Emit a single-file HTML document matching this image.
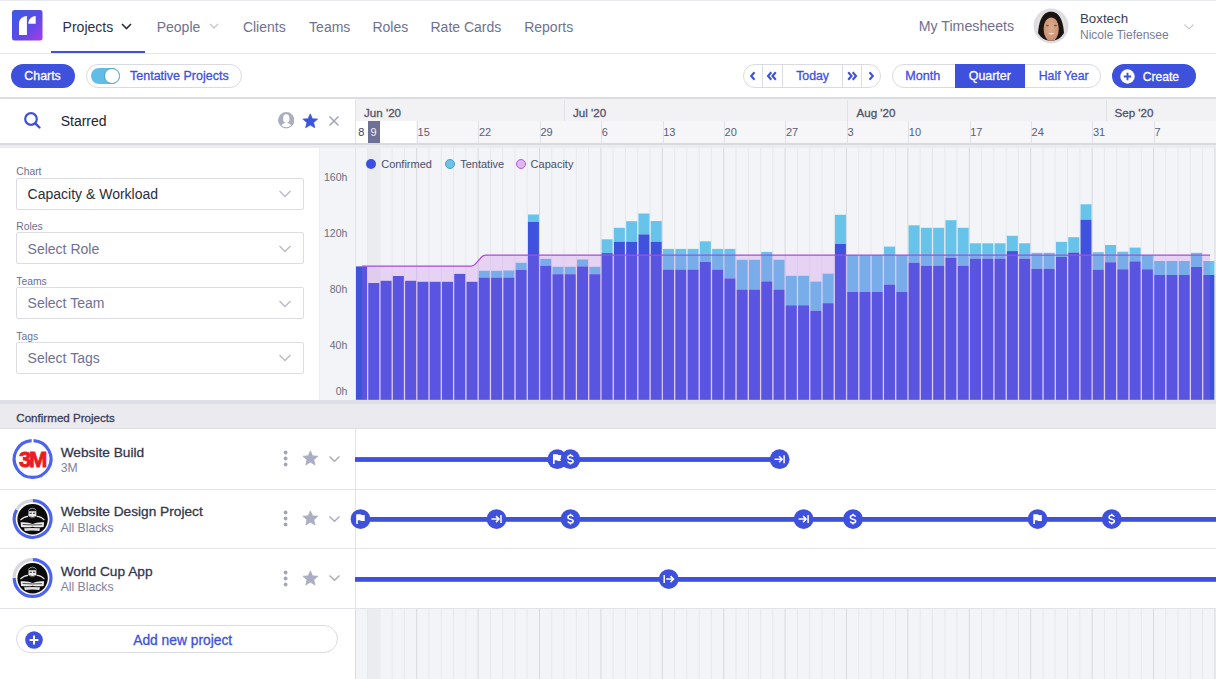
<!DOCTYPE html>
<html><head><meta charset="utf-8"><style>
html,body{margin:0;padding:0;width:1216px;height:679px;overflow:hidden;background:#fff}
body{position:relative;font-family:"Liberation Sans", sans-serif}
.t{position:absolute;white-space:nowrap;line-height:1}
.r{position:absolute}
svg{display:block}
</style></head><body>
<div class="r" style="left:0.0px;top:0.0px;width:1216.0px;height:1.0px;background:#E9EAEE;"></div>
<div class="r" style="left:0.0px;top:53.0px;width:1216.0px;height:1.0px;background:#E6E7EC;"></div>
<svg class="r" style="left:12px;top:10px" width="31" height="31" viewBox="0 0 31 31">
<defs><linearGradient id="lg" x1="0" y1="0" x2="1" y2="1"><stop offset="0" stop-color="#3B5BE6"/><stop offset="0.55" stop-color="#5B4BE6"/><stop offset="1" stop-color="#A93BE6"/></linearGradient></defs>
<rect x="0" y="0" width="30.5" height="30.5" rx="2.5" fill="url(#lg)"/>
<path d="M7 25V13.5C7 9.5 10 6.2 14.9 6V25Z" fill="#fff"/>
<path d="M16.3 13.8C16.3 9.6 19.2 6.2 23.7 6V13.8Z" fill="#fff"/>
</svg>
<div class="t" style="left:62.6px;top:19.8px;font-size:14px;color:#2E3040;font-weight:normal;">Projects</div>
<svg class="r" style="left:120px;top:22px" width="13" height="9" viewBox="0 0 13 9"><path d="M2 2L6.5 6.5L11 2" stroke="#2E3040" stroke-width="1.6" fill="none"/></svg>
<div class="r" style="left:51.0px;top:50.5px;width:94.0px;height:2.2px;background:#3E51DC;"></div>
<div class="t" style="left:156.7px;top:19.8px;font-size:14px;color:#6E7191;font-weight:normal;">People</div>
<svg class="r" style="left:208px;top:22px" width="12" height="8" viewBox="0 0 12 8"><path d="M2 2L6 6L10 2" stroke="#C3C5D3" stroke-width="1.3" fill="none"/></svg>
<div class="t" style="left:242.9px;top:19.8px;font-size:14px;color:#6E7191;font-weight:normal;">Clients</div>
<div class="t" style="left:309.1px;top:19.8px;font-size:14px;color:#6E7191;font-weight:normal;">Teams</div>
<div class="t" style="left:372.4px;top:19.8px;font-size:14px;color:#6E7191;font-weight:normal;">Roles</div>
<div class="t" style="left:430.5px;top:19.8px;font-size:14px;color:#6E7191;font-weight:normal;">Rate Cards</div>
<div class="t" style="left:524.2px;top:19.8px;font-size:14px;color:#6E7191;font-weight:normal;">Reports</div>
<div class="t" style="left:918.7px;top:19.4px;font-size:14.2px;color:#6E7191;font-weight:normal;">My Timesheets</div>
<svg class="r" style="left:1033.4px;top:8.4px" width="36" height="36" viewBox="0 0 36 36">
<defs><clipPath id="ac"><circle cx="18" cy="18" r="14.7"/></clipPath><radialGradient id="fg" cx="0.5" cy="0.45" r="0.6"><stop offset="0" stop-color="#DDAD8F"/><stop offset="1" stop-color="#C48B6C"/></radialGradient></defs>
<circle cx="18" cy="18" r="17.4" fill="#DCDCE2"/>
<circle cx="18" cy="18" r="14.7" fill="#E4E1DF"/>
<g clip-path="url(#ac)">
<path d="M4.8 36C4.6 22 5.5 4.2 18 3.4C30.5 4.2 31.4 22 31.2 36Z" fill="#191311"/>
<ellipse cx="18.2" cy="20.8" rx="7.6" ry="12.6" fill="url(#fg)"/>
<path d="M10.2 19C10.5 11 13.5 6.8 18.2 6.8C23 6.8 26 11 26.2 19C25 13 22 9.6 18.2 9.6C14.5 9.6 11.4 13 10.2 19Z" fill="#191311"/>
<ellipse cx="14.4" cy="17.6" rx="1.5" ry="0.8" fill="#7A5442"/>
<ellipse cx="22.4" cy="17.6" rx="1.5" ry="0.8" fill="#7A5442"/>
<path d="M14.8 24.8Q18.3 28.2 21.8 24.8Q18.3 25.9 14.8 24.8Z" fill="#F6F2EE"/>
</g></svg>
<div class="t" style="left:1080.0px;top:12.1px;font-size:13.3px;color:#3A3C58;font-weight:normal;">Boxtech</div>
<div class="t" style="left:1080.0px;top:28.8px;font-size:12px;color:#7A7D9A;font-weight:normal;">Nicole Tiefensee</div>
<svg class="r" style="left:1183px;top:23px" width="12" height="8" viewBox="0 0 12 8"><path d="M1.5 1.5L6 6L10.5 1.5" stroke="#C8CAD6" stroke-width="1.2" fill="none"/></svg>
<div class="r" style="left:11.0px;top:63.8px;width:64.0px;height:24.2px;background:#3E51DC;border-radius:12px"></div>
<div class="t" style="left:24.3px;top:69.8px;font-size:12.4px;color:#fff;font-weight:normal;-webkit-text-stroke:0.3px #fff;">Charts</div>
<div class="r" style="left:85.5px;top:64.0px;width:156.5px;height:24.0px;background:#fff;border:1px solid #D9DAE2;border-radius:12px;box-sizing:border-box"></div>
<div class="r" style="left:91.3px;top:68.0px;width:28.0px;height:16.0px;background:#62BDE6;border-radius:8px"></div>
<div class="r" style="left:104.3px;top:68.3px;width:15.4px;height:15.4px;border-radius:50%;background:#fff;box-sizing:border-box;border:1.2px solid #3F9CC4"></div>
<div class="t" style="left:130.0px;top:69.7px;font-size:12.5px;color:#3E51DC;font-weight:normal;-webkit-text-stroke:0.3px #3E51DC;">Tentative Projects</div>
<div class="r" style="left:743.4px;top:64px;width:137.3px;height:23.6px;border:1px solid #D9DAE2;border-radius:12px;box-sizing:border-box;background:#fff"></div>
<div class="r" style="left:762.4px;top:64.5px;width:1.0px;height:22.6px;background:#DCDDE4;"></div>
<div class="r" style="left:781.5px;top:64.5px;width:1.0px;height:22.6px;background:#DCDDE4;"></div>
<div class="r" style="left:842.2px;top:64.5px;width:1.0px;height:22.6px;background:#DCDDE4;"></div>
<div class="r" style="left:861.4px;top:64.5px;width:1.0px;height:22.6px;background:#DCDDE4;"></div>
<svg class="r" style="left:748px;top:70px" width="10" height="12" viewBox="0 0 10 12"><path d="M6.5 2.3L3.2 6L6.5 9.7" stroke="#3E51DC" stroke-width="2.1" fill="none"/></svg>
<svg class="r" style="left:765px;top:70px" width="14" height="12" viewBox="0 0 14 12"><path d="M6.3 2.3L3 6L6.3 9.7M10.8 2.3L7.5 6L10.8 9.7" stroke="#3E51DC" stroke-width="2.1" fill="none"/></svg>
<div class="t" style="left:796.2px;top:70.4px;font-size:12.3px;color:#3E51DC;font-weight:normal;-webkit-text-stroke:0.3px #3E51DC;">Today</div>
<svg class="r" style="left:845px;top:70px" width="14" height="12" viewBox="0 0 14 12"><path d="M3.2 2.3L6.5 6L3.2 9.7M7.7 2.3L11 6L7.7 9.7" stroke="#3E51DC" stroke-width="2.1" fill="none"/></svg>
<svg class="r" style="left:866px;top:70px" width="10" height="12" viewBox="0 0 10 12"><path d="M3.5 2.3L6.8 6L3.5 9.7" stroke="#3E51DC" stroke-width="2.1" fill="none"/></svg>
<div class="r" style="left:891.9px;top:64px;width:209px;height:24px;border:1px solid #D9DAE2;border-radius:12px;box-sizing:border-box;background:#fff"></div>
<div class="r" style="left:954.8px;top:64.0px;width:69.9px;height:24.0px;background:#3E51DC;"></div>
<div class="t" style="left:905.3px;top:70.1px;font-size:12.6px;color:#3E51DC;font-weight:normal;-webkit-text-stroke:0.3px #3E51DC;">Month</div>
<div class="t" style="left:968.8px;top:70.3px;font-size:12.4px;color:#fff;font-weight:normal;-webkit-text-stroke:0.3px #fff;">Quarter</div>
<div class="t" style="left:1038.7px;top:70.4px;font-size:12.3px;color:#3E51DC;font-weight:normal;-webkit-text-stroke:0.3px #3E51DC;">Half Year</div>
<div class="r" style="left:1111.8px;top:64.0px;width:84.0px;height:24.0px;background:#3E51DC;border-radius:12px"></div>
<svg class="r" style="left:1119.5px;top:68.5px" width="15" height="15" viewBox="0 0 15 15"><circle cx="7.5" cy="7.5" r="7.2" fill="#fff"/><path d="M7.5 3.8V11.2M3.8 7.5H11.2" stroke="#3E51DC" stroke-width="1.9"/></svg>
<div class="t" style="left:1142.7px;top:70.6px;font-size:12.1px;color:#fff;font-weight:normal;-webkit-text-stroke:0.3px #fff;">Create</div>
<div class="r" style="left:0.0px;top:97.3px;width:1216.0px;height:2.2px;background:#DCDDE3;"></div>
<svg class="r" style="left:23px;top:111px" width="19" height="19" viewBox="0 0 19 19"><circle cx="8" cy="8" r="5.8" stroke="#3E51DC" stroke-width="2.2" fill="none"/><path d="M12.3 12.3L16.5 16.5" stroke="#3E51DC" stroke-width="2.4" stroke-linecap="round"/></svg>
<div class="t" style="left:60.7px;top:114.1px;font-size:14px;color:#1F2130;font-weight:normal;">Starred</div>
<svg class="r" style="left:277.5px;top:112.3px" width="16.5" height="16.5" viewBox="0 0 16.5 16.5"><defs><clipPath id="pc"><circle cx="8.25" cy="8.25" r="6.9"/></clipPath></defs><circle cx="8.25" cy="8.25" r="8.2" fill="#ABAEC0"/><g clip-path="url(#pc)"><ellipse cx="8.25" cy="6.6" rx="3.2" ry="4.3" fill="#fff"/><ellipse cx="8.25" cy="16" rx="5.6" ry="5.2" fill="#fff"/></g></svg>
<svg class="r" style="left:301.8px;top:112.5px" width="16.5" height="16.5" viewBox="0 0 24 24"><path d="M12 1.2L15.1 8.3L22.8 8.9L16.9 13.9L18.7 21.5L12 17.5L5.3 21.5L7.1 13.9L1.2 8.9L8.9 8.3Z" fill="#3B55E0" stroke="#3B55E0" stroke-width="1" stroke-linejoin="round"/></svg>
<svg class="r" style="left:328px;top:115px" width="12" height="12" viewBox="0 0 12 12"><path d="M1.5 1.5L10.5 10.5M10.5 1.5L1.5 10.5" stroke="#A2A5B8" stroke-width="1.5"/></svg>
<div class="r" style="left:355.0px;top:99.5px;width:1.0px;height:44.0px;background:#E3E4EA;"></div>
<div class="r" style="left:356.0px;top:99.3px;width:860.0px;height:21.5px;background:#F2F2F5;"></div>
<div class="r" style="left:356.0px;top:120.8px;width:860.0px;height:22.2px;background:#F6F6F9;"></div>
<div class="r" style="left:356.0px;top:120.8px;width:60.4px;height:22.2px;background:#FFFFFF;"></div>
<div class="r" style="left:563.7px;top:99.5px;width:1.0px;height:21.3px;background:#E1E2E8;"></div>
<div class="r" style="left:847.3px;top:99.5px;width:1.0px;height:21.3px;background:#E1E2E8;"></div>
<div class="r" style="left:1105.5px;top:99.5px;width:1.0px;height:21.3px;background:#E1E2E8;"></div>
<div class="t" style="left:364.0px;top:106.8px;font-size:11.6px;color:#505369;font-weight:normal;-webkit-text-stroke:0.3px #505369;">Jun '20</div>
<div class="t" style="left:573.0px;top:106.8px;font-size:11.6px;color:#505369;font-weight:normal;-webkit-text-stroke:0.3px #505369;">Jul '20</div>
<div class="t" style="left:856.5px;top:106.8px;font-size:11.6px;color:#505369;font-weight:normal;-webkit-text-stroke:0.3px #505369;">Aug '20</div>
<div class="t" style="left:1114.5px;top:106.8px;font-size:11.6px;color:#505369;font-weight:normal;-webkit-text-stroke:0.3px #505369;">Sep '20</div>
<div class="t" style="left:358.3px;top:126.5px;font-size:11px;color:#3F4259;font-weight:normal;">8</div>
<div class="r" style="left:416.9px;top:120.8px;width:1.0px;height:22.2px;background:#E1E2E8;"></div>
<div class="t" style="left:417.6px;top:126.5px;font-size:11px;color:#5A5D78;font-weight:normal;">15</div>
<div class="r" style="left:478.3px;top:120.8px;width:1.0px;height:22.2px;background:#E1E2E8;"></div>
<div class="t" style="left:479.0px;top:126.5px;font-size:11px;color:#5A5D78;font-weight:normal;">22</div>
<div class="r" style="left:539.7px;top:120.8px;width:1.0px;height:22.2px;background:#E1E2E8;"></div>
<div class="t" style="left:540.4px;top:126.5px;font-size:11px;color:#5A5D78;font-weight:normal;">29</div>
<div class="r" style="left:601.1px;top:120.8px;width:1.0px;height:22.2px;background:#E1E2E8;"></div>
<div class="t" style="left:601.8px;top:126.5px;font-size:11px;color:#5A5D78;font-weight:normal;">6</div>
<div class="r" style="left:662.5px;top:120.8px;width:1.0px;height:22.2px;background:#E1E2E8;"></div>
<div class="t" style="left:663.2px;top:126.5px;font-size:11px;color:#5A5D78;font-weight:normal;">13</div>
<div class="r" style="left:723.9px;top:120.8px;width:1.0px;height:22.2px;background:#E1E2E8;"></div>
<div class="t" style="left:724.6px;top:126.5px;font-size:11px;color:#5A5D78;font-weight:normal;">20</div>
<div class="r" style="left:785.3px;top:120.8px;width:1.0px;height:22.2px;background:#E1E2E8;"></div>
<div class="t" style="left:786.0px;top:126.5px;font-size:11px;color:#5A5D78;font-weight:normal;">27</div>
<div class="r" style="left:846.7px;top:120.8px;width:1.0px;height:22.2px;background:#E1E2E8;"></div>
<div class="t" style="left:847.4px;top:126.5px;font-size:11px;color:#5A5D78;font-weight:normal;">3</div>
<div class="r" style="left:908.1px;top:120.8px;width:1.0px;height:22.2px;background:#E1E2E8;"></div>
<div class="t" style="left:908.8px;top:126.5px;font-size:11px;color:#5A5D78;font-weight:normal;">10</div>
<div class="r" style="left:969.5px;top:120.8px;width:1.0px;height:22.2px;background:#E1E2E8;"></div>
<div class="t" style="left:970.2px;top:126.5px;font-size:11px;color:#5A5D78;font-weight:normal;">17</div>
<div class="r" style="left:1030.9px;top:120.8px;width:1.0px;height:22.2px;background:#E1E2E8;"></div>
<div class="t" style="left:1031.6px;top:126.5px;font-size:11px;color:#5A5D78;font-weight:normal;">24</div>
<div class="r" style="left:1092.3px;top:120.8px;width:1.0px;height:22.2px;background:#E1E2E8;"></div>
<div class="t" style="left:1093.0px;top:126.5px;font-size:11px;color:#5A5D78;font-weight:normal;">31</div>
<div class="r" style="left:1153.7px;top:120.8px;width:1.0px;height:22.2px;background:#E1E2E8;"></div>
<div class="t" style="left:1154.4px;top:126.5px;font-size:11px;color:#5A5D78;font-weight:normal;">7</div>
<div class="r" style="left:368.2px;top:120.8px;width:11.6px;height:22.2px;background:#6E7196;"></div>
<div class="t" style="left:370.6px;top:126.5px;font-size:11px;color:#F2F2F8;font-weight:normal;">9</div>
<div class="r" style="left:0.0px;top:142.8px;width:1216.0px;height:2.0px;background:#D9DAE0;"></div>
<div class="r" style="left:0.0px;top:144.8px;width:1216.0px;height:3.4px;background:#ECECF0;"></div>
<div class="r" style="left:0.0px;top:148.2px;width:319.2px;height:252.0px;background:#FFFFFF;"></div>
<div class="r" style="left:319.2px;top:148.2px;width:896.8px;height:252.0px;background:#F3F4F7;"></div>
<div class="r" style="left:319.2px;top:148.2px;width:1.0px;height:252.0px;background:#ECEDF1;"></div>
<div class="t" style="left:16.3px;top:167.4px;font-size:10.3px;color:#6C6F90;font-weight:normal;">Chart</div>
<div class="r" style="left:16.3px;top:177.5px;width:287.7px;height:32.3px;border:1px solid #DCDDE3;border-radius:2px;box-sizing:border-box;background:#fff"></div>
<div class="t" style="left:27.6px;top:186.9px;font-size:14px;color:#2B2D3A;font-weight:normal;">Capacity &amp; Workload</div>
<svg class="r" style="left:278px;top:189.0px" width="14" height="10" viewBox="0 0 14 10"><path d="M1.5 2L7 7.5L12.5 2" stroke="#B9BBC9" stroke-width="1.4" fill="none"/></svg>
<div class="t" style="left:16.3px;top:222.1px;font-size:10.3px;color:#6C6F90;font-weight:normal;">Roles</div>
<div class="r" style="left:16.3px;top:232.2px;width:287.7px;height:32.3px;border:1px solid #DCDDE3;border-radius:2px;box-sizing:border-box;background:#fff"></div>
<div class="t" style="left:27.6px;top:241.7px;font-size:14px;color:#6E7196;font-weight:normal;">Select Role</div>
<svg class="r" style="left:278px;top:243.7px" width="14" height="10" viewBox="0 0 14 10"><path d="M1.5 2L7 7.5L12.5 2" stroke="#B9BBC9" stroke-width="1.4" fill="none"/></svg>
<div class="t" style="left:16.3px;top:276.8px;font-size:10.3px;color:#6C6F90;font-weight:normal;">Teams</div>
<div class="r" style="left:16.3px;top:287.0px;width:287.7px;height:32.3px;border:1px solid #DCDDE3;border-radius:2px;box-sizing:border-box;background:#fff"></div>
<div class="t" style="left:27.6px;top:296.4px;font-size:14px;color:#6E7196;font-weight:normal;">Select Team</div>
<svg class="r" style="left:278px;top:298.5px" width="14" height="10" viewBox="0 0 14 10"><path d="M1.5 2L7 7.5L12.5 2" stroke="#B9BBC9" stroke-width="1.4" fill="none"/></svg>
<div class="t" style="left:16.3px;top:331.6px;font-size:10.3px;color:#6C6F90;font-weight:normal;">Tags</div>
<div class="r" style="left:16.3px;top:341.7px;width:287.7px;height:32.3px;border:1px solid #DCDDE3;border-radius:2px;box-sizing:border-box;background:#fff"></div>
<div class="t" style="left:27.6px;top:351.1px;font-size:14px;color:#6E7196;font-weight:normal;">Select Tags</div>
<svg class="r" style="left:278px;top:353.2px" width="14" height="10" viewBox="0 0 14 10"><path d="M1.5 2L7 7.5L12.5 2" stroke="#B9BBC9" stroke-width="1.4" fill="none"/></svg>
<div class="t" style="right:868.7px;top:172.1px;font-size:10.5px;color:#6A6D7E">160h</div>
<div class="t" style="right:868.7px;top:228.0px;font-size:10.5px;color:#6A6D7E">120h</div>
<div class="t" style="right:868.7px;top:283.8px;font-size:10.5px;color:#6A6D7E">80h</div>
<div class="t" style="right:868.7px;top:339.7px;font-size:10.5px;color:#6A6D7E">40h</div>
<div class="t" style="right:868.7px;top:386.2px;font-size:10.5px;color:#6A6D7E">0h</div>
<svg class="r" style="left:356px;top:148.2px" width="860" height="251.8" viewBox="356 148.2 860 251.8"><rect x="366.98" y="148.2" width="12.28" height="251.8" fill="#EBECEF"/><rect x="354.80" y="148.2" width="1" height="251.8" fill="#D8D9DF"/><rect x="367.08" y="148.2" width="1" height="251.8" fill="#E7E8EC"/><rect x="379.36" y="148.2" width="1" height="251.8" fill="#E7E8EC"/><rect x="391.64" y="148.2" width="1" height="251.8" fill="#E7E8EC"/><rect x="403.92" y="148.2" width="1" height="251.8" fill="#E7E8EC"/><rect x="416.20" y="148.2" width="1" height="251.8" fill="#D8D9DF"/><rect x="428.48" y="148.2" width="1" height="251.8" fill="#E7E8EC"/><rect x="440.76" y="148.2" width="1" height="251.8" fill="#E7E8EC"/><rect x="453.04" y="148.2" width="1" height="251.8" fill="#E7E8EC"/><rect x="465.32" y="148.2" width="1" height="251.8" fill="#E7E8EC"/><rect x="477.60" y="148.2" width="1" height="251.8" fill="#D8D9DF"/><rect x="489.88" y="148.2" width="1" height="251.8" fill="#E7E8EC"/><rect x="502.16" y="148.2" width="1" height="251.8" fill="#E7E8EC"/><rect x="514.44" y="148.2" width="1" height="251.8" fill="#E7E8EC"/><rect x="526.72" y="148.2" width="1" height="251.8" fill="#E7E8EC"/><rect x="539.00" y="148.2" width="1" height="251.8" fill="#D8D9DF"/><rect x="551.28" y="148.2" width="1" height="251.8" fill="#E7E8EC"/><rect x="563.56" y="148.2" width="1" height="251.8" fill="#E7E8EC"/><rect x="575.84" y="148.2" width="1" height="251.8" fill="#E7E8EC"/><rect x="588.12" y="148.2" width="1" height="251.8" fill="#E7E8EC"/><rect x="600.40" y="148.2" width="1" height="251.8" fill="#D8D9DF"/><rect x="612.68" y="148.2" width="1" height="251.8" fill="#E7E8EC"/><rect x="624.96" y="148.2" width="1" height="251.8" fill="#E7E8EC"/><rect x="637.24" y="148.2" width="1" height="251.8" fill="#E7E8EC"/><rect x="649.52" y="148.2" width="1" height="251.8" fill="#E7E8EC"/><rect x="661.80" y="148.2" width="1" height="251.8" fill="#D8D9DF"/><rect x="674.08" y="148.2" width="1" height="251.8" fill="#E7E8EC"/><rect x="686.36" y="148.2" width="1" height="251.8" fill="#E7E8EC"/><rect x="698.64" y="148.2" width="1" height="251.8" fill="#E7E8EC"/><rect x="710.92" y="148.2" width="1" height="251.8" fill="#E7E8EC"/><rect x="723.20" y="148.2" width="1" height="251.8" fill="#D8D9DF"/><rect x="735.48" y="148.2" width="1" height="251.8" fill="#E7E8EC"/><rect x="747.76" y="148.2" width="1" height="251.8" fill="#E7E8EC"/><rect x="760.04" y="148.2" width="1" height="251.8" fill="#E7E8EC"/><rect x="772.32" y="148.2" width="1" height="251.8" fill="#E7E8EC"/><rect x="784.60" y="148.2" width="1" height="251.8" fill="#D8D9DF"/><rect x="796.88" y="148.2" width="1" height="251.8" fill="#E7E8EC"/><rect x="809.16" y="148.2" width="1" height="251.8" fill="#E7E8EC"/><rect x="821.44" y="148.2" width="1" height="251.8" fill="#E7E8EC"/><rect x="833.72" y="148.2" width="1" height="251.8" fill="#E7E8EC"/><rect x="846.00" y="148.2" width="1" height="251.8" fill="#D8D9DF"/><rect x="858.28" y="148.2" width="1" height="251.8" fill="#E7E8EC"/><rect x="870.56" y="148.2" width="1" height="251.8" fill="#E7E8EC"/><rect x="882.84" y="148.2" width="1" height="251.8" fill="#E7E8EC"/><rect x="895.12" y="148.2" width="1" height="251.8" fill="#E7E8EC"/><rect x="907.40" y="148.2" width="1" height="251.8" fill="#D8D9DF"/><rect x="919.68" y="148.2" width="1" height="251.8" fill="#E7E8EC"/><rect x="931.96" y="148.2" width="1" height="251.8" fill="#E7E8EC"/><rect x="944.24" y="148.2" width="1" height="251.8" fill="#E7E8EC"/><rect x="956.52" y="148.2" width="1" height="251.8" fill="#E7E8EC"/><rect x="968.80" y="148.2" width="1" height="251.8" fill="#D8D9DF"/><rect x="981.08" y="148.2" width="1" height="251.8" fill="#E7E8EC"/><rect x="993.36" y="148.2" width="1" height="251.8" fill="#E7E8EC"/><rect x="1005.64" y="148.2" width="1" height="251.8" fill="#E7E8EC"/><rect x="1017.92" y="148.2" width="1" height="251.8" fill="#E7E8EC"/><rect x="1030.20" y="148.2" width="1" height="251.8" fill="#D8D9DF"/><rect x="1042.48" y="148.2" width="1" height="251.8" fill="#E7E8EC"/><rect x="1054.76" y="148.2" width="1" height="251.8" fill="#E7E8EC"/><rect x="1067.04" y="148.2" width="1" height="251.8" fill="#E7E8EC"/><rect x="1079.32" y="148.2" width="1" height="251.8" fill="#E7E8EC"/><rect x="1091.60" y="148.2" width="1" height="251.8" fill="#D8D9DF"/><rect x="1103.88" y="148.2" width="1" height="251.8" fill="#E7E8EC"/><rect x="1116.16" y="148.2" width="1" height="251.8" fill="#E7E8EC"/><rect x="1128.44" y="148.2" width="1" height="251.8" fill="#E7E8EC"/><rect x="1140.72" y="148.2" width="1" height="251.8" fill="#E7E8EC"/><rect x="1153.00" y="148.2" width="1" height="251.8" fill="#D8D9DF"/><rect x="1165.28" y="148.2" width="1" height="251.8" fill="#E7E8EC"/><rect x="1177.56" y="148.2" width="1" height="251.8" fill="#E7E8EC"/><rect x="1189.84" y="148.2" width="1" height="251.8" fill="#E7E8EC"/><rect x="1202.12" y="148.2" width="1" height="251.8" fill="#E7E8EC"/><rect x="1214.40" y="148.2" width="1" height="251.8" fill="#D8D9DF"/><rect x="356.00" y="266.60" width="11.0" height="133.40" fill="#3F52DE"/><rect x="368.28" y="283.20" width="11.0" height="116.80" fill="#3F52DE"/><rect x="380.56" y="281.00" width="11.0" height="119.00" fill="#3F52DE"/><rect x="392.84" y="276.20" width="11.0" height="123.80" fill="#3F52DE"/><rect x="405.12" y="281.00" width="11.0" height="119.00" fill="#3F52DE"/><rect x="417.40" y="282.00" width="11.0" height="118.00" fill="#3F52DE"/><rect x="429.68" y="282.00" width="11.0" height="118.00" fill="#3F52DE"/><rect x="441.96" y="282.00" width="11.0" height="118.00" fill="#3F52DE"/><rect x="454.24" y="274.10" width="11.0" height="125.90" fill="#3F52DE"/><rect x="466.52" y="282.00" width="11.0" height="118.00" fill="#3F52DE"/><rect x="478.80" y="271.00" width="11.0" height="6.80" fill="#67C3E9"/><rect x="478.80" y="277.80" width="11.0" height="122.20" fill="#3F52DE"/><rect x="491.08" y="271.00" width="11.0" height="6.80" fill="#67C3E9"/><rect x="491.08" y="277.80" width="11.0" height="122.20" fill="#3F52DE"/><rect x="503.36" y="270.70" width="11.0" height="7.10" fill="#67C3E9"/><rect x="503.36" y="277.80" width="11.0" height="122.20" fill="#3F52DE"/><rect x="515.64" y="263.00" width="11.0" height="7.10" fill="#67C3E9"/><rect x="515.64" y="270.10" width="11.0" height="129.90" fill="#3F52DE"/><rect x="527.92" y="214.70" width="11.0" height="7.40" fill="#67C3E9"/><rect x="527.92" y="222.10" width="11.0" height="177.90" fill="#3F52DE"/><rect x="540.20" y="259.00" width="11.0" height="7.00" fill="#67C3E9"/><rect x="540.20" y="266.00" width="11.0" height="134.00" fill="#3F52DE"/><rect x="552.48" y="267.00" width="11.0" height="7.40" fill="#67C3E9"/><rect x="552.48" y="274.40" width="11.0" height="125.60" fill="#3F52DE"/><rect x="564.76" y="267.00" width="11.0" height="7.40" fill="#67C3E9"/><rect x="564.76" y="274.40" width="11.0" height="125.60" fill="#3F52DE"/><rect x="577.04" y="259.70" width="11.0" height="6.90" fill="#67C3E9"/><rect x="577.04" y="266.60" width="11.0" height="133.40" fill="#3F52DE"/><rect x="589.32" y="267.00" width="11.0" height="7.40" fill="#67C3E9"/><rect x="589.32" y="274.40" width="11.0" height="125.60" fill="#3F52DE"/><rect x="601.60" y="239.50" width="11.0" height="13.80" fill="#67C3E9"/><rect x="601.60" y="253.30" width="11.0" height="146.70" fill="#3F52DE"/><rect x="613.88" y="228.00" width="11.0" height="14.00" fill="#67C3E9"/><rect x="613.88" y="242.00" width="11.0" height="158.00" fill="#3F52DE"/><rect x="626.16" y="221.40" width="11.0" height="20.60" fill="#67C3E9"/><rect x="626.16" y="242.00" width="11.0" height="158.00" fill="#3F52DE"/><rect x="638.44" y="213.70" width="11.0" height="20.90" fill="#67C3E9"/><rect x="638.44" y="234.60" width="11.0" height="165.40" fill="#3F52DE"/><rect x="650.72" y="221.20" width="11.0" height="20.80" fill="#67C3E9"/><rect x="650.72" y="242.00" width="11.0" height="158.00" fill="#3F52DE"/><rect x="663.00" y="249.10" width="11.0" height="20.70" fill="#67C3E9"/><rect x="663.00" y="269.80" width="11.0" height="130.20" fill="#3F52DE"/><rect x="675.28" y="249.10" width="11.0" height="20.70" fill="#67C3E9"/><rect x="675.28" y="269.80" width="11.0" height="130.20" fill="#3F52DE"/><rect x="687.56" y="249.10" width="11.0" height="20.70" fill="#67C3E9"/><rect x="687.56" y="269.80" width="11.0" height="130.20" fill="#3F52DE"/><rect x="699.84" y="241.50" width="11.0" height="20.70" fill="#67C3E9"/><rect x="699.84" y="262.20" width="11.0" height="137.80" fill="#3F52DE"/><rect x="712.12" y="249.10" width="11.0" height="20.70" fill="#67C3E9"/><rect x="712.12" y="269.80" width="11.0" height="130.20" fill="#3F52DE"/><rect x="724.40" y="249.10" width="11.0" height="29.50" fill="#67C3E9"/><rect x="724.40" y="278.60" width="11.0" height="121.40" fill="#3F52DE"/><rect x="736.68" y="260.00" width="11.0" height="29.80" fill="#67C3E9"/><rect x="736.68" y="289.80" width="11.0" height="110.20" fill="#3F52DE"/><rect x="748.96" y="260.00" width="11.0" height="29.80" fill="#67C3E9"/><rect x="748.96" y="289.80" width="11.0" height="110.20" fill="#3F52DE"/><rect x="761.24" y="252.10" width="11.0" height="29.50" fill="#67C3E9"/><rect x="761.24" y="281.60" width="11.0" height="118.40" fill="#3F52DE"/><rect x="773.52" y="260.00" width="11.0" height="29.80" fill="#67C3E9"/><rect x="773.52" y="289.80" width="11.0" height="110.20" fill="#3F52DE"/><rect x="785.80" y="276.00" width="11.0" height="29.50" fill="#67C3E9"/><rect x="785.80" y="305.50" width="11.0" height="94.50" fill="#3F52DE"/><rect x="798.08" y="276.00" width="11.0" height="29.50" fill="#67C3E9"/><rect x="798.08" y="305.50" width="11.0" height="94.50" fill="#3F52DE"/><rect x="810.36" y="281.80" width="11.0" height="29.20" fill="#67C3E9"/><rect x="810.36" y="311.00" width="11.0" height="89.00" fill="#3F52DE"/><rect x="822.64" y="273.90" width="11.0" height="29.50" fill="#67C3E9"/><rect x="822.64" y="303.40" width="11.0" height="96.60" fill="#3F52DE"/><rect x="834.92" y="215.00" width="11.0" height="29.20" fill="#67C3E9"/><rect x="834.92" y="244.20" width="11.0" height="155.80" fill="#3F52DE"/><rect x="847.20" y="255.30" width="11.0" height="36.90" fill="#67C3E9"/><rect x="847.20" y="292.20" width="11.0" height="107.80" fill="#3F52DE"/><rect x="859.48" y="255.30" width="11.0" height="36.90" fill="#67C3E9"/><rect x="859.48" y="292.20" width="11.0" height="107.80" fill="#3F52DE"/><rect x="871.76" y="255.30" width="11.0" height="36.90" fill="#67C3E9"/><rect x="871.76" y="292.20" width="11.0" height="107.80" fill="#3F52DE"/><rect x="884.04" y="246.80" width="11.0" height="38.00" fill="#67C3E9"/><rect x="884.04" y="284.80" width="11.0" height="115.20" fill="#3F52DE"/><rect x="896.32" y="255.30" width="11.0" height="36.90" fill="#67C3E9"/><rect x="896.32" y="292.20" width="11.0" height="107.80" fill="#3F52DE"/><rect x="908.60" y="225.50" width="11.0" height="37.50" fill="#67C3E9"/><rect x="908.60" y="263.00" width="11.0" height="137.00" fill="#3F52DE"/><rect x="920.88" y="228.00" width="11.0" height="38.00" fill="#67C3E9"/><rect x="920.88" y="266.00" width="11.0" height="134.00" fill="#3F52DE"/><rect x="933.16" y="228.00" width="11.0" height="38.00" fill="#67C3E9"/><rect x="933.16" y="266.00" width="11.0" height="134.00" fill="#3F52DE"/><rect x="945.44" y="220.40" width="11.0" height="37.60" fill="#67C3E9"/><rect x="945.44" y="258.00" width="11.0" height="142.00" fill="#3F52DE"/><rect x="957.72" y="228.00" width="11.0" height="38.00" fill="#67C3E9"/><rect x="957.72" y="266.00" width="11.0" height="134.00" fill="#3F52DE"/><rect x="970.00" y="243.50" width="11.0" height="15.40" fill="#67C3E9"/><rect x="970.00" y="258.90" width="11.0" height="141.10" fill="#3F52DE"/><rect x="982.28" y="243.50" width="11.0" height="15.40" fill="#67C3E9"/><rect x="982.28" y="258.90" width="11.0" height="141.10" fill="#3F52DE"/><rect x="994.56" y="243.50" width="11.0" height="15.40" fill="#67C3E9"/><rect x="994.56" y="258.90" width="11.0" height="141.10" fill="#3F52DE"/><rect x="1006.84" y="236.00" width="11.0" height="15.30" fill="#67C3E9"/><rect x="1006.84" y="251.30" width="11.0" height="148.70" fill="#3F52DE"/><rect x="1019.12" y="243.50" width="11.0" height="15.40" fill="#67C3E9"/><rect x="1019.12" y="258.90" width="11.0" height="141.10" fill="#3F52DE"/><rect x="1031.40" y="253.00" width="11.0" height="16.00" fill="#67C3E9"/><rect x="1031.40" y="269.00" width="11.0" height="131.00" fill="#3F52DE"/><rect x="1043.68" y="253.00" width="11.0" height="16.00" fill="#67C3E9"/><rect x="1043.68" y="269.00" width="11.0" height="131.00" fill="#3F52DE"/><rect x="1055.96" y="242.10" width="11.0" height="15.10" fill="#67C3E9"/><rect x="1055.96" y="257.20" width="11.0" height="142.80" fill="#3F52DE"/><rect x="1068.24" y="237.40" width="11.0" height="15.40" fill="#67C3E9"/><rect x="1068.24" y="252.80" width="11.0" height="147.20" fill="#3F52DE"/><rect x="1080.52" y="204.50" width="11.0" height="15.50" fill="#67C3E9"/><rect x="1080.52" y="220.00" width="11.0" height="180.00" fill="#3F52DE"/><rect x="1092.80" y="252.40" width="11.0" height="17.50" fill="#67C3E9"/><rect x="1092.80" y="269.90" width="11.0" height="130.10" fill="#3F52DE"/><rect x="1105.08" y="245.20" width="11.0" height="17.30" fill="#67C3E9"/><rect x="1105.08" y="262.50" width="11.0" height="137.50" fill="#3F52DE"/><rect x="1117.36" y="251.90" width="11.0" height="17.60" fill="#67C3E9"/><rect x="1117.36" y="269.50" width="11.0" height="130.50" fill="#3F52DE"/><rect x="1129.64" y="247.80" width="11.0" height="13.80" fill="#67C3E9"/><rect x="1129.64" y="261.60" width="11.0" height="138.40" fill="#3F52DE"/><rect x="1141.92" y="255.40" width="11.0" height="14.10" fill="#67C3E9"/><rect x="1141.92" y="269.50" width="11.0" height="130.50" fill="#3F52DE"/><rect x="1154.20" y="261.20" width="11.0" height="14.00" fill="#67C3E9"/><rect x="1154.20" y="275.20" width="11.0" height="124.80" fill="#3F52DE"/><rect x="1166.48" y="261.20" width="11.0" height="14.00" fill="#67C3E9"/><rect x="1166.48" y="275.20" width="11.0" height="124.80" fill="#3F52DE"/><rect x="1178.76" y="261.20" width="11.0" height="14.00" fill="#67C3E9"/><rect x="1178.76" y="275.20" width="11.0" height="124.80" fill="#3F52DE"/><rect x="1191.04" y="253.00" width="11.0" height="14.20" fill="#67C3E9"/><rect x="1191.04" y="267.20" width="11.0" height="132.80" fill="#3F52DE"/><rect x="1203.32" y="261.20" width="11.0" height="14.00" fill="#67C3E9"/><rect x="1203.32" y="275.20" width="11.0" height="124.80" fill="#3F52DE"/><path d="M362.0 266.3 L471 266.3 Q473.6 266.3 475.2 264.40000000000003 L481.6 257.2 Q483.2 255.3 485.8 255.3 L1210.0 255.3 L1210.0 400 L362.0 400Z" fill="rgba(185,96,238,0.22)"/><path d="M362.0 266.3 L471 266.3 Q473.6 266.3 475.2 264.40000000000003 L481.6 257.2 Q483.2 255.3 485.8 255.3 L1210.0 255.3" stroke="#AA48E4" stroke-width="1.25" fill="none"/></svg>
<div class="r" style="left:365.7px;top:159px;width:10.4px;height:10.4px;border-radius:50%;background:#3B50E0"></div>
<div class="t" style="left:381.2px;top:159.0px;font-size:11px;color:#4A4D6A;font-weight:normal;">Confirmed</div>
<div class="r" style="left:444.7px;top:159px;width:10.4px;height:10.4px;border-radius:50%;background:#6BC3E6;border:1px solid #4A9DC6;box-sizing:border-box"></div>
<div class="t" style="left:460.2px;top:159.0px;font-size:11px;color:#4A4D6A;font-weight:normal;">Tentative</div>
<div class="r" style="left:515.5px;top:159px;width:10.4px;height:10.4px;border-radius:50%;background:#DDB8F2;border:1px solid #B25AE6;box-sizing:border-box"></div>
<div class="t" style="left:530.6px;top:159.0px;font-size:11px;color:#4A4D6A;font-weight:normal;">Capacity</div>
<div class="r" style="left:355.2px;top:148.2px;width:1.0px;height:252.0px;background:#E3E4EA;"></div>
<div class="r" style="left:0.0px;top:400.0px;width:1216.0px;height:3.5px;background:#DFDFE7;"></div>
<div class="r" style="left:0.0px;top:403.5px;width:1216.0px;height:25.7px;background:#EAEAEF;"></div>
<div class="r" style="left:0.0px;top:428.4px;width:1216.0px;height:1.0px;background:#DEDFE5;"></div>
<div class="t" style="left:16.3px;top:411.8px;font-size:11.6px;color:#3A3D55;font-weight:normal;-webkit-text-stroke:0.3px #3A3D55;">Confirmed Projects</div>
<div class="r" style="left:0.0px;top:429.2px;width:1216.0px;height:179.0px;background:#FFFFFF;"></div>
<div class="r" style="left:0.0px;top:488.5px;width:1216.0px;height:1.1px;background:#E3E4EA;"></div>
<div class="r" style="left:0.0px;top:547.9px;width:1216.0px;height:1.1px;background:#E3E4EA;"></div>
<div class="r" style="left:0.0px;top:607.6px;width:1216.0px;height:1.1px;background:#E3E4EA;"></div>
<div class="r" style="left:355.0px;top:429.2px;width:1.0px;height:250.0px;background:#E3E4EA;"></div>
<svg class="r" style="left:8px;top:433.7px" width="50" height="50" viewBox="8 433.7 50 50"><path d="M33.56 440.33A18.4 18.4 0 1 1 31.64 440.33" stroke="#4B63F0" stroke-width="3.1" fill="none"/><text x="32.1" y="466.59999999999997" text-anchor="middle" font-family="Liberation Sans" font-weight="bold" font-size="22" letter-spacing="-2.2" fill="#EC1B22" stroke="#EC1B22" stroke-width="0.9">3M</text></svg>
<div class="t" style="left:60.7px;top:445.6px;font-size:13.7px;color:#34364D;font-weight:normal;-webkit-text-stroke:0.3px #34364D;">Website Build</div>
<div class="t" style="left:60.7px;top:461.7px;font-size:12.2px;color:#7F829C;font-weight:normal;">3M</div>
<svg class="r" style="left:282px;top:450.2px" width="8" height="18" viewBox="0 0 8 18"><circle cx="3.6" cy="2.5" r="1.9" fill="#A2A5BA"/><circle cx="3.6" cy="8.5" r="1.9" fill="#A2A5BA"/><circle cx="3.6" cy="14.5" r="1.9" fill="#A2A5BA"/></svg>
<svg class="r" style="left:301.6px;top:449.9px" width="16.8" height="16.8" viewBox="0 0 24 24"><path d="M12 1.2L15.1 8.3L22.8 8.9L16.9 13.9L18.7 21.5L12 17.5L5.3 21.5L7.1 13.9L1.2 8.9L8.9 8.3Z" fill="#ABADC4" stroke="#ABADC4" stroke-width="1" stroke-linejoin="round"/></svg>
<svg class="r" style="left:328px;top:454.7px" width="13" height="8" viewBox="0 0 13 8"><path d="M1.5 1.5L6.5 6.3L11.5 1.5" stroke="#A8ABBE" stroke-width="1.4" fill="none"/></svg>
<svg class="r" style="left:8px;top:493.5px" width="50" height="50" viewBox="8 493.5 50 50"><path d="M32.60 500.10A18.4 18.4 0 1 1 16.67 509.30" stroke="#4B63F0" stroke-width="3.2" fill="none"/><path d="M16.67 509.30A18.4 18.4 0 0 1 32.57 500.10" stroke="#D7D8DE" stroke-width="3.2" fill="none"/><circle cx="32.6" cy="518.8" r="15.2" fill="#0B0B0B"/><path d="M28.6 509.29999999999995Q32.4 505.19999999999993 36.2 509.29999999999995L36.4 515.3Q32.4 519.0 28.400000000000002 515.3Z" fill="#EDEDED"/><path d="M28.900000000000002 509.49999999999994Q32.4 506.19999999999993 36.0 509.49999999999994L36.0 510.79999999999995L28.900000000000002 510.79999999999995Z" fill="#1A1A1A"/><path d="M29.6 512.1999999999999h2.3v1.1h-2.3zM33.0 512.1999999999999h2.3v1.1h-2.3z" fill="#2A2A2A"/><path d="M30.0 515.5999999999999Q32.4 517.3 35.0 515.5999999999999L34.6 517.1999999999999Q32.4 518.4 30.400000000000002 517.1999999999999Z" fill="#555"/><path d="M20.400000000000002 519.5999999999999Q24.1 515.8 28.200000000000003 515.9M36.6 515.9Q40.900000000000006 515.8 44.400000000000006 519.5999999999999" stroke="#E6E6E6" stroke-width="1.2" fill="none"/><path d="M20.6 521.8Q28.6 521.4 32.6 523.4Q36.6 521.4 44.1 521.8L43.6 526.4Q36.6 527.1999999999999 32.6 526.1999999999999Q28.6 527.1999999999999 21.1 526.4Z" fill="#EDEDED"/><path d="M22.6 524.0Q32.6 524.8 42.1 524.1999999999999" stroke="#222" stroke-width="0.8" fill="none"/><path d="M24.1 527.8Q32.1 527.0 40.0 527.8L39.4 530.4Q32.1 529.8 24.8 530.4Z" fill="#E0E0E0"/></svg>
<div class="t" style="left:60.7px;top:505.4px;font-size:13.7px;color:#34364D;font-weight:normal;-webkit-text-stroke:0.3px #34364D;">Website Design Project</div>
<div class="t" style="left:60.7px;top:521.5px;font-size:12.2px;color:#7F829C;font-weight:normal;">All Blacks</div>
<svg class="r" style="left:282px;top:510.0px" width="8" height="18" viewBox="0 0 8 18"><circle cx="3.6" cy="2.5" r="1.9" fill="#A2A5BA"/><circle cx="3.6" cy="8.5" r="1.9" fill="#A2A5BA"/><circle cx="3.6" cy="14.5" r="1.9" fill="#A2A5BA"/></svg>
<svg class="r" style="left:301.6px;top:509.7px" width="16.8" height="16.8" viewBox="0 0 24 24"><path d="M12 1.2L15.1 8.3L22.8 8.9L16.9 13.9L18.7 21.5L12 17.5L5.3 21.5L7.1 13.9L1.2 8.9L8.9 8.3Z" fill="#ABADC4" stroke="#ABADC4" stroke-width="1" stroke-linejoin="round"/></svg>
<svg class="r" style="left:328px;top:514.5px" width="13" height="8" viewBox="0 0 13 8"><path d="M1.5 1.5L6.5 6.3L11.5 1.5" stroke="#A8ABBE" stroke-width="1.4" fill="none"/></svg>
<svg class="r" style="left:8px;top:553.4px" width="50" height="50" viewBox="8 553.4 50 50"><path d="M32.60 560.00A18.4 18.4 0 1 1 14.20 578.40" stroke="#4B63F0" stroke-width="3.2" fill="none"/><path d="M14.20 578.40A18.4 18.4 0 0 1 32.57 560.00" stroke="#D7D8DE" stroke-width="3.2" fill="none"/><circle cx="32.6" cy="578.6999999999999" r="15.2" fill="#0B0B0B"/><path d="M28.6 569.1999999999999Q32.4 565.0999999999999 36.2 569.1999999999999L36.4 575.1999999999999Q32.4 578.9 28.400000000000002 575.1999999999999Z" fill="#EDEDED"/><path d="M28.900000000000002 569.4Q32.4 566.0999999999999 36.0 569.4L36.0 570.6999999999999L28.900000000000002 570.6999999999999Z" fill="#1A1A1A"/><path d="M29.6 572.0999999999999h2.3v1.1h-2.3zM33.0 572.0999999999999h2.3v1.1h-2.3z" fill="#2A2A2A"/><path d="M30.0 575.4999999999999Q32.4 577.1999999999999 35.0 575.4999999999999L34.6 577.0999999999999Q32.4 578.3 30.400000000000002 577.0999999999999Z" fill="#555"/><path d="M20.400000000000002 579.4999999999999Q24.1 575.6999999999999 28.200000000000003 575.8M36.6 575.8Q40.900000000000006 575.6999999999999 44.400000000000006 579.4999999999999" stroke="#E6E6E6" stroke-width="1.2" fill="none"/><path d="M20.6 581.6999999999999Q28.6 581.3 32.6 583.3Q36.6 581.3 44.1 581.6999999999999L43.6 586.3Q36.6 587.0999999999999 32.6 586.0999999999999Q28.6 587.0999999999999 21.1 586.3Z" fill="#EDEDED"/><path d="M22.6 583.9Q32.6 584.6999999999999 42.1 584.0999999999999" stroke="#222" stroke-width="0.8" fill="none"/><path d="M24.1 587.6999999999999Q32.1 586.9 40.0 587.6999999999999L39.4 590.3Q32.1 589.6999999999999 24.8 590.3Z" fill="#E0E0E0"/></svg>
<div class="t" style="left:60.7px;top:565.3px;font-size:13.7px;color:#34364D;font-weight:normal;-webkit-text-stroke:0.3px #34364D;">World Cup App</div>
<div class="t" style="left:60.7px;top:581.4px;font-size:12.2px;color:#7F829C;font-weight:normal;">All Blacks</div>
<svg class="r" style="left:282px;top:569.9px" width="8" height="18" viewBox="0 0 8 18"><circle cx="3.6" cy="2.5" r="1.9" fill="#A2A5BA"/><circle cx="3.6" cy="8.5" r="1.9" fill="#A2A5BA"/><circle cx="3.6" cy="14.5" r="1.9" fill="#A2A5BA"/></svg>
<svg class="r" style="left:301.6px;top:569.6px" width="16.8" height="16.8" viewBox="0 0 24 24"><path d="M12 1.2L15.1 8.3L22.8 8.9L16.9 13.9L18.7 21.5L12 17.5L5.3 21.5L7.1 13.9L1.2 8.9L8.9 8.3Z" fill="#ABADC4" stroke="#ABADC4" stroke-width="1" stroke-linejoin="round"/></svg>
<svg class="r" style="left:328px;top:574.4px" width="13" height="8" viewBox="0 0 13 8"><path d="M1.5 1.5L6.5 6.3L11.5 1.5" stroke="#A8ABBE" stroke-width="1.4" fill="none"/></svg>
<svg class="r" style="left:345px;top:429px" width="871" height="180" viewBox="345 429 871 180"><rect x="355" y="457.1" width="424.6" height="4.8" fill="#3E51DC"/><circle cx="557.3" cy="459.2" r="9.9" fill="#3E51DC"/><path d="M553.0 464.09999999999997V454.3H557.5L558.3 455.09999999999997H561.5V461.09999999999997H557.6999999999999L556.9 460.3H554.5999999999999V464.09999999999997Z" fill="#fff"/><circle cx="570.4" cy="459.2" r="9.9" fill="#3E51DC"/><path d="M573.0 456.9C572.6 455.9 571.6 455.4 570.4 455.4C568.8 455.4 567.8 456.2 567.8 457.4C567.8 458.7 569.0 459.0 570.4 459.3C571.9 459.59999999999997 573.1 460.09999999999997 573.1 461.2C573.1 462.4 572.0 463.09999999999997 570.4 463.09999999999997C569.1 463.09999999999997 568.1 462.5 567.6999999999999 461.5M570.4 453.9V455.4M570.4 463.09999999999997V464.59999999999997" stroke="#fff" stroke-width="1.5" fill="none"/><circle cx="779.6" cy="459.2" r="9.9" fill="#3E51DC"/><path d="M774.6 459.2H781.9M779.1 456.2L782.1 459.2L779.1 462.2M784.1 455.2V463.2" stroke="#fff" stroke-width="1.5" fill="none"/><rect x="355" y="517.0" width="861" height="4.8" fill="#3E51DC"/><circle cx="360.5" cy="519.1" r="9.9" fill="#3E51DC"/><path d="M356.2 524.0V514.2H360.7L361.5 515.0H364.7V521.0H360.9L360.1 520.2H357.8V524.0Z" fill="#fff"/><circle cx="496.5" cy="519.1" r="9.9" fill="#3E51DC"/><path d="M491.5 519.1H498.8M496.0 516.1L499.0 519.1L496.0 522.1M501.0 515.1V523.1" stroke="#fff" stroke-width="1.5" fill="none"/><circle cx="570.5" cy="519.1" r="9.9" fill="#3E51DC"/><path d="M573.1 516.8000000000001C572.7 515.8000000000001 571.7 515.3000000000001 570.5 515.3000000000001C568.9 515.3000000000001 567.9 516.1 567.9 517.3000000000001C567.9 518.6 569.1 518.9 570.5 519.2C572.0 519.5 573.2 520.0 573.2 521.1C573.2 522.3000000000001 572.1 523.0 570.5 523.0C569.2 523.0 568.2 522.4 567.8 521.4M570.5 513.8000000000001V515.3000000000001M570.5 523.0V524.5" stroke="#fff" stroke-width="1.5" fill="none"/><circle cx="803.6" cy="519.1" r="9.9" fill="#3E51DC"/><path d="M798.6 519.1H805.9M803.1 516.1L806.1 519.1L803.1 522.1M808.1 515.1V523.1" stroke="#fff" stroke-width="1.5" fill="none"/><circle cx="853" cy="519.1" r="9.9" fill="#3E51DC"/><path d="M855.6 516.8000000000001C855.2 515.8000000000001 854.2 515.3000000000001 853 515.3000000000001C851.4 515.3000000000001 850.4 516.1 850.4 517.3000000000001C850.4 518.6 851.6 518.9 853 519.2C854.5 519.5 855.7 520.0 855.7 521.1C855.7 522.3000000000001 854.6 523.0 853 523.0C851.7 523.0 850.7 522.4 850.3 521.4M853 513.8000000000001V515.3000000000001M853 523.0V524.5" stroke="#fff" stroke-width="1.5" fill="none"/><circle cx="1037.6" cy="519.1" r="9.9" fill="#3E51DC"/><path d="M1033.3 524.0V514.2H1037.8L1038.6 515.0H1041.8V521.0H1038.0L1037.1999999999998 520.2H1034.8999999999999V524.0Z" fill="#fff"/><circle cx="1111.7" cy="519.1" r="9.9" fill="#3E51DC"/><path d="M1114.3 516.8000000000001C1113.9 515.8000000000001 1112.9 515.3000000000001 1111.7 515.3000000000001C1110.1000000000001 515.3000000000001 1109.1000000000001 516.1 1109.1000000000001 517.3000000000001C1109.1000000000001 518.6 1110.3 518.9 1111.7 519.2C1113.2 519.5 1114.4 520.0 1114.4 521.1C1114.4 522.3000000000001 1113.3 523.0 1111.7 523.0C1110.4 523.0 1109.4 522.4 1109.0 521.4M1111.7 513.8000000000001V515.3000000000001M1111.7 523.0V524.5" stroke="#fff" stroke-width="1.5" fill="none"/><rect x="355" y="577.0" width="861" height="4.8" fill="#3E51DC"/><circle cx="668.7" cy="579.1" r="9.9" fill="#3E51DC"/><path d="M664.2 575.1V583.1M666.2 579.1H673.5M670.5 576.1L673.5 579.1L670.5 582.1" stroke="#fff" stroke-width="1.5" fill="none"/></svg>
<svg class="r" style="left:355px;top:608.6px" width="861" height="71" viewBox="355 608.6 861 71"><rect x="355" y="608.6" width="861" height="71" fill="#F3F4F7"/><rect x="366.98" y="608.6" width="12.28" height="71" fill="#EBECEF"/><rect x="354.80" y="608.6" width="1" height="71" fill="#D8D9DF"/><rect x="367.08" y="608.6" width="1" height="71" fill="#E7E8EC"/><rect x="379.36" y="608.6" width="1" height="71" fill="#E7E8EC"/><rect x="391.64" y="608.6" width="1" height="71" fill="#E7E8EC"/><rect x="403.92" y="608.6" width="1" height="71" fill="#E7E8EC"/><rect x="416.20" y="608.6" width="1" height="71" fill="#D8D9DF"/><rect x="428.48" y="608.6" width="1" height="71" fill="#E7E8EC"/><rect x="440.76" y="608.6" width="1" height="71" fill="#E7E8EC"/><rect x="453.04" y="608.6" width="1" height="71" fill="#E7E8EC"/><rect x="465.32" y="608.6" width="1" height="71" fill="#E7E8EC"/><rect x="477.60" y="608.6" width="1" height="71" fill="#D8D9DF"/><rect x="489.88" y="608.6" width="1" height="71" fill="#E7E8EC"/><rect x="502.16" y="608.6" width="1" height="71" fill="#E7E8EC"/><rect x="514.44" y="608.6" width="1" height="71" fill="#E7E8EC"/><rect x="526.72" y="608.6" width="1" height="71" fill="#E7E8EC"/><rect x="539.00" y="608.6" width="1" height="71" fill="#D8D9DF"/><rect x="551.28" y="608.6" width="1" height="71" fill="#E7E8EC"/><rect x="563.56" y="608.6" width="1" height="71" fill="#E7E8EC"/><rect x="575.84" y="608.6" width="1" height="71" fill="#E7E8EC"/><rect x="588.12" y="608.6" width="1" height="71" fill="#E7E8EC"/><rect x="600.40" y="608.6" width="1" height="71" fill="#D8D9DF"/><rect x="612.68" y="608.6" width="1" height="71" fill="#E7E8EC"/><rect x="624.96" y="608.6" width="1" height="71" fill="#E7E8EC"/><rect x="637.24" y="608.6" width="1" height="71" fill="#E7E8EC"/><rect x="649.52" y="608.6" width="1" height="71" fill="#E7E8EC"/><rect x="661.80" y="608.6" width="1" height="71" fill="#D8D9DF"/><rect x="674.08" y="608.6" width="1" height="71" fill="#E7E8EC"/><rect x="686.36" y="608.6" width="1" height="71" fill="#E7E8EC"/><rect x="698.64" y="608.6" width="1" height="71" fill="#E7E8EC"/><rect x="710.92" y="608.6" width="1" height="71" fill="#E7E8EC"/><rect x="723.20" y="608.6" width="1" height="71" fill="#D8D9DF"/><rect x="735.48" y="608.6" width="1" height="71" fill="#E7E8EC"/><rect x="747.76" y="608.6" width="1" height="71" fill="#E7E8EC"/><rect x="760.04" y="608.6" width="1" height="71" fill="#E7E8EC"/><rect x="772.32" y="608.6" width="1" height="71" fill="#E7E8EC"/><rect x="784.60" y="608.6" width="1" height="71" fill="#D8D9DF"/><rect x="796.88" y="608.6" width="1" height="71" fill="#E7E8EC"/><rect x="809.16" y="608.6" width="1" height="71" fill="#E7E8EC"/><rect x="821.44" y="608.6" width="1" height="71" fill="#E7E8EC"/><rect x="833.72" y="608.6" width="1" height="71" fill="#E7E8EC"/><rect x="846.00" y="608.6" width="1" height="71" fill="#D8D9DF"/><rect x="858.28" y="608.6" width="1" height="71" fill="#E7E8EC"/><rect x="870.56" y="608.6" width="1" height="71" fill="#E7E8EC"/><rect x="882.84" y="608.6" width="1" height="71" fill="#E7E8EC"/><rect x="895.12" y="608.6" width="1" height="71" fill="#E7E8EC"/><rect x="907.40" y="608.6" width="1" height="71" fill="#D8D9DF"/><rect x="919.68" y="608.6" width="1" height="71" fill="#E7E8EC"/><rect x="931.96" y="608.6" width="1" height="71" fill="#E7E8EC"/><rect x="944.24" y="608.6" width="1" height="71" fill="#E7E8EC"/><rect x="956.52" y="608.6" width="1" height="71" fill="#E7E8EC"/><rect x="968.80" y="608.6" width="1" height="71" fill="#D8D9DF"/><rect x="981.08" y="608.6" width="1" height="71" fill="#E7E8EC"/><rect x="993.36" y="608.6" width="1" height="71" fill="#E7E8EC"/><rect x="1005.64" y="608.6" width="1" height="71" fill="#E7E8EC"/><rect x="1017.92" y="608.6" width="1" height="71" fill="#E7E8EC"/><rect x="1030.20" y="608.6" width="1" height="71" fill="#D8D9DF"/><rect x="1042.48" y="608.6" width="1" height="71" fill="#E7E8EC"/><rect x="1054.76" y="608.6" width="1" height="71" fill="#E7E8EC"/><rect x="1067.04" y="608.6" width="1" height="71" fill="#E7E8EC"/><rect x="1079.32" y="608.6" width="1" height="71" fill="#E7E8EC"/><rect x="1091.60" y="608.6" width="1" height="71" fill="#D8D9DF"/><rect x="1103.88" y="608.6" width="1" height="71" fill="#E7E8EC"/><rect x="1116.16" y="608.6" width="1" height="71" fill="#E7E8EC"/><rect x="1128.44" y="608.6" width="1" height="71" fill="#E7E8EC"/><rect x="1140.72" y="608.6" width="1" height="71" fill="#E7E8EC"/><rect x="1153.00" y="608.6" width="1" height="71" fill="#D8D9DF"/><rect x="1165.28" y="608.6" width="1" height="71" fill="#E7E8EC"/><rect x="1177.56" y="608.6" width="1" height="71" fill="#E7E8EC"/><rect x="1189.84" y="608.6" width="1" height="71" fill="#E7E8EC"/><rect x="1202.12" y="608.6" width="1" height="71" fill="#E7E8EC"/><rect x="1214.40" y="608.6" width="1" height="71" fill="#D8D9DF"/><rect x="354.6" y="608.6" width="1.2" height="71" fill="#D9DADF"/></svg>
<div class="r" style="left:16.3px;top:625.3px;width:321.7px;height:28.1px;border:1px solid #D9DAE2;border-radius:14px;box-sizing:border-box;background:#fff"></div>
<svg class="r" style="left:24.5px;top:630.7px" width="18" height="18" viewBox="0 0 18 18"><circle cx="9" cy="9" r="8.8" fill="#3E51DC"/><path d="M9 4.6V13.4M4.6 9H13.4" stroke="#fff" stroke-width="2"/></svg>
<div class="t" style="left:133.2px;top:633.7px;font-size:13.8px;color:#3E51DC;font-weight:normal;-webkit-text-stroke:0.3px #3E51DC;">Add new project</div>
</body></html>
